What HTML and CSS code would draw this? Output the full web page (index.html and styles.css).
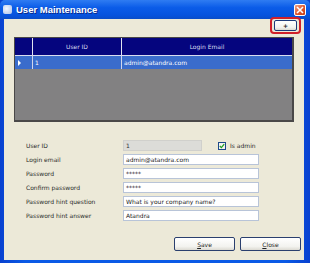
FILE: index.html
```html
<!DOCTYPE html>
<html lang="en">
<head>
    <meta charset="UTF-8">
    <title>User Maintenance</title>
    <link rel="stylesheet" href="styles.css">
</head>
<body>
    <div class="window">
        <div class="titlebar">
            <span class="app-icon"></span>
            <span class="title">User Maintenance</span>
            <span class="close-btn">
                <svg width="8" height="8" viewBox="0 0 8 8"><path d="M1 1 L7 7 M7 1 L1 7" stroke="#fff" stroke-width="1.6"/></svg>
            </span>
        </div>

        <div class="client">
            <div class="toolbar">
                <div class="highlight">
                    <button class="btn add-btn">+</button>
                </div>
            </div>

            <div class="grid">
                <div class="grid-head">
                    <div class="cell sel"></div>
                    <div class="cell">User ID</div>
                    <div class="cell">Login Email</div>
                </div>
                <div class="grid-row">
                    <div class="cell sel"><span class="arrow"></span></div>
                    <div class="cell">1</div>
                    <div class="cell">admin@atandra.com</div>
                </div>
            </div>

            <div class="form">
                <label>User ID</label>
                <div class="field-line">
                    <div class="input disabled">1</div>
                    <span class="check"><svg width="6" height="6" viewBox="0 0 6 6"><path d="M0.8 3 L2.4 4.6 L5.2 1.2" fill="none" stroke="#21a121" stroke-width="1.3"/></svg></span>
                    <span class="check-label">Is admin</span>
                </div>

                <label>Login email</label>
                <div class="input">admin@atandra.com</div>

                <label>Password</label>
                <div class="input">*****</div>

                <label>Confirm password</label>
                <div class="input">*****</div>

                <label>Password hint question</label>
                <div class="input">What is your company name?</div>

                <label>Password hint answer</label>
                <div class="input">Atandra</div>
            </div>

            <div class="actions">
                <button class="btn wide"><u>S</u>ave</button>
                <button class="btn wide"><u>C</u>lose</button>
            </div>
        </div>
    </div>
</body>
</html>
```

FILE: styles.css
```css
:root {
    --xp-blue: #0a5ae6;
    --face: #ece9d8;
    --navy: #05057e;
    --selected: #3a6ccc;
}

* {
    box-sizing: border-box;
    margin: 0;
    padding: 0;
}

body {
    font-family: 'DejaVu Sans', Verdana, sans-serif;
    font-size: 6px;
    background: #fff;
}

.window {
    width: 310px;
    height: 263px;
    background: linear-gradient(90deg, #0841d0, var(--xp-blue) 8%, var(--xp-blue) 92%, #0841d0);
    display: flex;
    flex-direction: column;
    padding: 0 6px 3px 4px;
}

.titlebar {
    height: 19px;
    display: flex;
    align-items: center;
    gap: 4px;
    margin: 0 -6px 0 -4px;
    padding: 0 4px 0 3px;
    background: linear-gradient(#2f7cf2, #0b5ce8 40%, #0653de 80%, #0a4dc8);
    border-radius: 5px 5px 0 0;
}

.app-icon {
    width: 9px;
    height: 9px;
    border-radius: 2px;
    background: radial-gradient(circle at 40% 40%, #f2f6ff, #a9c0e8);
}

.title {
    flex: 1;
    color: #fff;
    font-family: 'Liberation Sans', Arial, sans-serif;
    font-weight: bold;
    font-size: 9.5px;
    text-shadow: 1px 1px 0 #0a2a8a;
}

.close-btn {
    width: 12px;
    height: 12px;
    border: 1px solid #fff;
    border-radius: 2px;
    background: linear-gradient(135deg, #f0a58a, #e0562c 55%, #c63c12);
    display: flex;
    align-items: center;
    justify-content: center;
}

.client {
    flex: 1;
    background: var(--face);
    display: flex;
    flex-direction: column;
    padding: 0 10px 0 10px;
}

.toolbar {
    display: flex;
    justify-content: flex-end;
    height: 17px;
    margin-right: -7px;
}

.highlight {
    border: 2px solid #d0202a;
    border-radius: 4px;
    padding: 1px 2px;
    height: 17px;
    margin-top: -2px;
}

.btn {
    font-family: 'DejaVu Sans', Verdana, sans-serif;
    font-size: 6px;
    color: #222;
    background: linear-gradient(#ffffff, #f3f3ef 70%, #dcdad2);
    border: 1px solid #1c3a7a;
    border-radius: 2px;
}

.add-btn {
    width: 23px;
    height: 11px;
    font-weight: bold;
    line-height: 9px;
}

.grid {
    height: 85px;
    margin-top: 1px;
    background: #828182;
    border: 1px solid #4a4848;
    border-right-width: 2px;
    border-bottom-width: 2px;
}

.grid-head,
.grid-row {
    display: grid;
    grid-template-columns: 18px 89px 1fr;
}

.grid-head {
    height: 17px;
    background: var(--navy);
    color: #d8dcf0;
}

.grid-head .cell {
    border-right: 1px solid #e0e4f0;
    display: flex;
    align-items: center;
    justify-content: center;
}

.grid-head .cell:last-child {
    border-right: none;
}

.grid-row {
    height: 14px;
    background: var(--selected);
    color: #fff;
    border-top: 1px solid #d8dcf0;
}

.grid-row .cell {
    display: flex;
    align-items: center;
    padding-left: 2px;
    border-right: 1px solid #d0d6ec;
}

.grid-row .cell:last-child {
    border-right: none;
}

.arrow {
    width: 0;
    height: 0;
    border-top: 3px solid transparent;
    border-bottom: 3px solid transparent;
    border-left: 3px solid #fff;
    margin-left: 1px;
}

.form {
    display: grid;
    grid-template-columns: 97px 136px;
    row-gap: 3px;
    align-items: center;
    margin: 18px 0 0 12px;
    color: #2a2a2a;
}

.input {
    height: 11px;
    background: #fff;
    border: 1px solid #b8c4d8;
    padding-left: 2px;
    display: flex;
    align-items: center;
    color: #222;
}

.input.disabled {
    width: 79px;
    background: #dcdcd8;
    border-color: #d0d0cc;
    color: #333;
}

.field-line {
    display: flex;
    align-items: center;
}

.check {
    width: 8px;
    height: 8px;
    margin-left: 16px;
    border: 1px solid #1e4a8a;
    background: #f4f4f0;
    display: flex;
    align-items: center;
    justify-content: center;
}

.check-label {
    margin-left: 4px;
}

.actions {
    display: flex;
    justify-content: flex-end;
    gap: 5px;
    margin: 16px -7px 0 0;
}

.btn.wide {
    width: 61px;
    height: 14px;
    border-color: #2a3f6e;
}
```
